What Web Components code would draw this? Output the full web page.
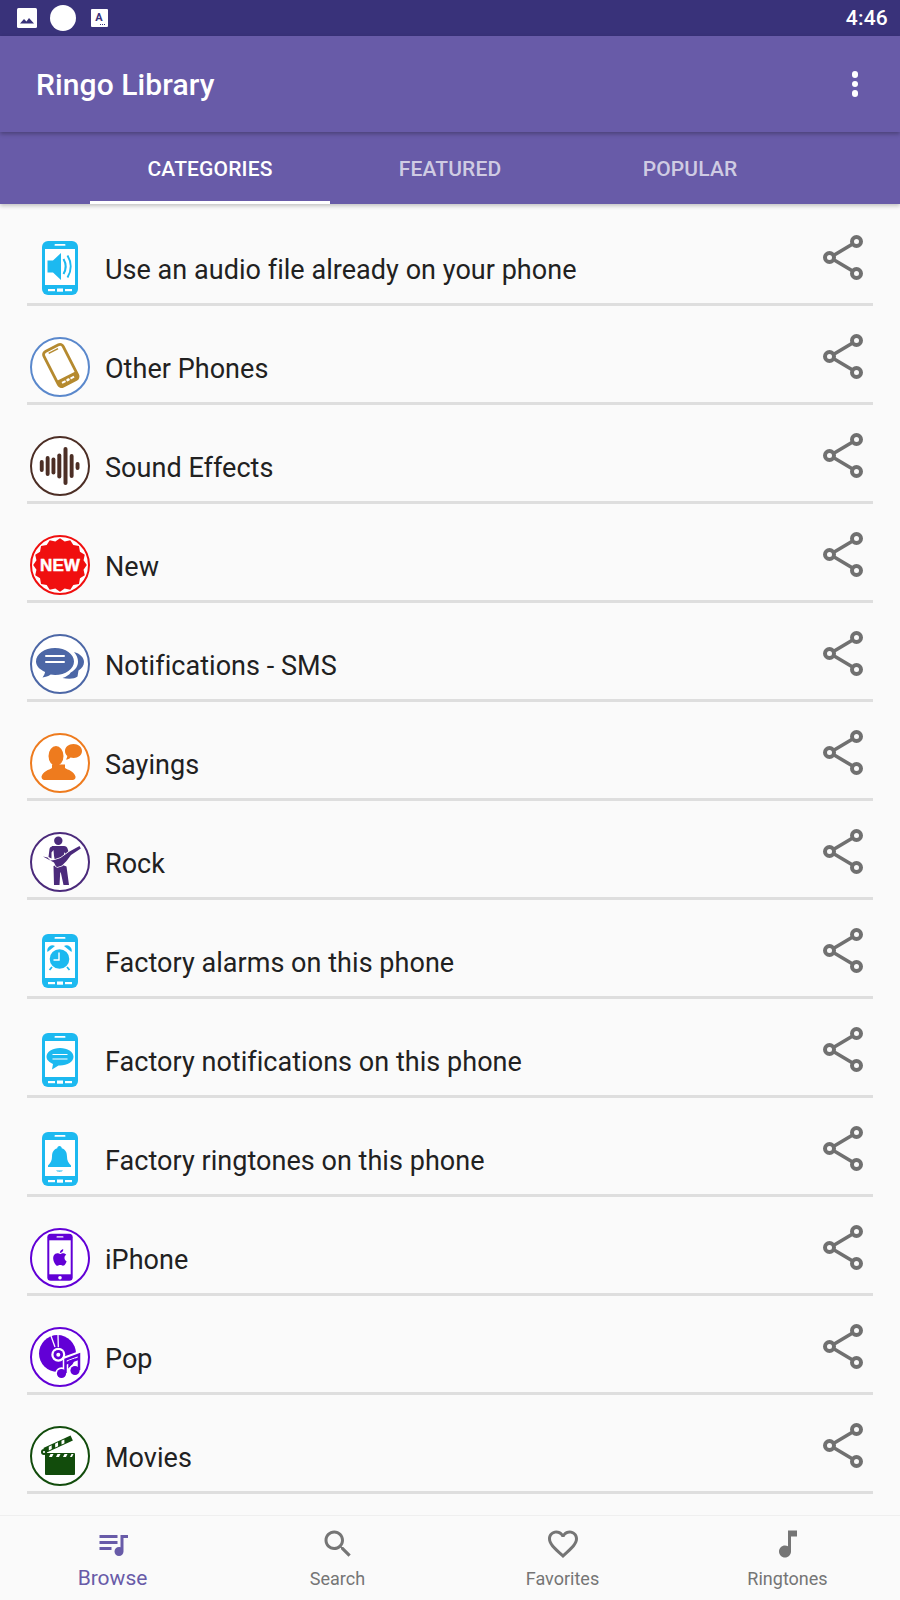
<!DOCTYPE html>
<html lang="en">
<head>
<meta charset="utf-8">
<title>Ringo Library</title>
<style>
    html, body { margin: 0; padding: 0; background: #fafafa; }
    body { font-family: Roboto, "Liberation Sans", sans-serif; }
</style>
</head>
<body>
<ringo-app>
    <status-bar slot="top"></status-bar>
    <app-bar slot="top">Ringo Library</app-bar>
    <tab-strip slot="top">
        <tab-item active>CATEGORIES</tab-item>
        <tab-item>FEATURED</tab-item>
        <tab-item>POPULAR</tab-item>
    </tab-strip>

    <category-row icon="audio">Use an audio file already on your phone</category-row>
    <category-row icon="phones">Other Phones</category-row>
    <category-row icon="sound">Sound Effects</category-row>
    <category-row icon="new">New</category-row>
    <category-row icon="sms">Notifications - SMS</category-row>
    <category-row icon="sayings">Sayings</category-row>
    <category-row icon="rock">Rock</category-row>
    <category-row icon="alarm">Factory alarms on this phone</category-row>
    <category-row icon="message">Factory notifications on this phone</category-row>
    <category-row icon="bell">Factory ringtones on this phone</category-row>
    <category-row icon="iphone">iPhone</category-row>
    <category-row icon="pop">Pop</category-row>
    <category-row icon="movies">Movies</category-row>

    <nav-bar slot="bottom">
        <nav-item icon="browse" active>Browse</nav-item>
        <nav-item icon="search">Search</nav-item>
        <nav-item icon="heart">Favorites</nav-item>
        <nav-item icon="note">Ringtones</nav-item>
    </nav-bar>
</ringo-app>

<script>
const BLUE = '#1cb9f0';
const VIOLET = '#6200d6';
const RED = '#f00f0f';

// body and bottom keys shared by all the blue phone icons
function phone(inner) {
    return `<svg class="tall" width="36" height="54" viewBox="0 0 36 54">
        <rect width="36" height="54" rx="6" fill="${BLUE}"/>
        <rect x="3" y="8" width="30" height="36" fill="#fff"/>
        <rect x="12.5" y="3" width="11" height="1.8" rx=".9" fill="#fff"/>
        <rect x="6" y="48" width="7" height="2.2" fill="#fff"/>
        <rect x="15" y="47.5" width="6" height="3.2" fill="#fff"/>
        <rect x="23" y="48" width="7" height="2.2" fill="#fff"/>
        ${inner}
    </svg>`;
}

function circled(color, inner) {
    return `<svg width="60" height="60" viewBox="0 0 60 60">
        <circle cx="30" cy="30" r="29" fill="#fff" stroke="${color}" stroke-width="2"/>
        ${inner}
    </svg>`;
}

// scalloped edge of the NEW badge
function badgeEdge() {
    const pts = [];
    for (let i = 0; i < 32; i++) {
        const r = i % 2 ? 24 : 26.8;
        const a = Math.PI * i / 16;
        pts.push((30 + r * Math.sin(a)).toFixed(2) + ',' + (30 - r * Math.cos(a)).toFixed(2));
    }
    return pts.join(' ');
}

const CATEGORY_ICONS = {
    audio: phone(`<path d="M5.5 19.5h5.500l8-7.500v27l-8-7.500H5.500z" fill="${BLUE}"/>
        <path d="M21.500 18c2.800 4.800 2.800 10.200 0 15M25.500 14.500c4.200 6.800 4.200 15.200 0 22" fill="none" stroke="${BLUE}" stroke-width="2"/>`),
    alarm: phone(`<path d="M5.500 18a5.200 5.200 0 0 1 7.500-6zM29.500 18a5.200 5.200 0 0 0-7.500-6z" fill="${BLUE}"/>
        <path d="M10 33l-2.500 3M25 33l2.500 3" stroke="${BLUE}" stroke-width="1.800"/>
        <circle cx="17.500" cy="25" r="9.800" fill="${BLUE}"/>
        <path d="M17 18.500v7.500h-5.500" fill="none" stroke="#fff" stroke-width="1.400"/>`),
    message: phone(`<path d="M18 15c7.500 0 13.500 3.800 13.500 8.800s-6 8.700-13.500 8.700c-.6 0-1 0-1.500-.1L10 36.500l1-5.600C7.200 29.400 4.500 26.800 4.500 23.800 4.500 18.800 10.500 15 18 15z" fill="${BLUE}"/>
        <path d="M10.500 21.500h15M10.500 26h15" stroke="#fff" stroke-width="1.200"/>`),
    bell: phone(`<path d="M17.500 14c1.400 0 2.200 1 2.200 2.200 4 1.200 5.300 4.500 5.300 8.300 0 4 1.300 6.500 4 9v1.500H6v-1.500c2.700-2.500 4-5 4-9 0-3.800 1.300-7.100 5.300-8.300 0-1.200.8-2.200 2.200-2.200z" fill="${BLUE}"/>
        <path d="M14 38.500c1.500 1.600 5.500 1.600 7 0z" fill="${BLUE}"/>`),
    phones: circled('#5a88cc', `<g transform="rotate(-27 30.800 28.500)">
        <rect x="20" y="9" width="21.600" height="39" rx="3.500" fill="#fff" stroke="#b58a2f" stroke-width="2.800"/>
        <path d="M20 40.500h21.600v4a3.500 3.500 0 0 1-3.500 3.500H23.500a3.500 3.500 0 0 1-3.500-3.500z" fill="#b58a2f"/>
        <rect x="25.500" y="11.500" width="10.500" height="1.500" fill="#b58a2f"/>
        <rect x="24" y="43.500" width="4" height="2" fill="#fff"/><rect x="29" y="43.300" width="3.500" height="2.500" rx="1" fill="#fff"/><rect x="33.500" y="43.500" width="4" height="2" fill="#fff"/>
    </g>`),
    sound: circled('#4c2e25', `<g fill="#4c2e25">
        <rect x="9.800" y="24" width="3.900" height="12" rx="1.900"/>
        <rect x="15.700" y="20" width="3.900" height="20" rx="1.900"/>
        <rect x="21.500" y="21.500" width="3.900" height="17" rx="1.900"/>
        <rect x="27.300" y="17.500" width="4" height="25" rx="2"/>
        <rect x="33.500" y="11" width="4" height="38" rx="2"/>
        <rect x="39.700" y="18" width="3.900" height="24" rx="1.900"/>
        <rect x="45.600" y="26" width="3.900" height="8" rx="1.900"/>
    </g>`),
    new: `<svg width="60" height="60" viewBox="0 0 60 60">
        <circle cx="30" cy="30" r="29" fill="#fff" stroke="${RED}" stroke-width="2"/>
        <polygon points="${badgeEdge()}" fill="${RED}"/>
        <text x="30" y="36" text-anchor="middle" font-family="'Liberation Sans',sans-serif" font-weight="700" font-size="17" fill="#fff" stroke="#fff" stroke-width=".5">NEW</text>
    </svg>`,
    sms: circled('#4c67a6', `<path d="M44 18c6 1.500 10 5.500 10 10 0 3.500-2 6.500-5.500 8.500l-1 6c-3 2.500-9 2.600-15 1.500 4-1.300 6.800-3.200 8.200-5.500 5-2.500 7.300-6.500 7.300-11 0-3.400-1.500-6.700-4-9.500z" fill="#4c67a6"/>
        <path d="M25 14c10.500 0 19 6 19 13.500S35.500 41 25 41c-1.500 0-3-.1-4.300-.4-2.500 1.700-5.200 2.600-8.200 2.800 1.400-1.800 2.300-3.800 2.600-5.500C9.500 35.500 6 31.800 6 27.500 6 20 14.500 14 25 14z" fill="#4c67a6" stroke="#fff" stroke-width="1.500" paint-order="stroke"/>
        <path d="M16 22h18M16 28h18" stroke="#fff" stroke-width="2" stroke-linecap="round"/>`),
    sayings: circled('#ee7b1e', `<g fill="#ee7b1e">
        <ellipse cx="26" cy="23" rx="7.500" ry="10"/>
        <path d="M22 31.500v3.500c-3 2-9 3-10.500 8.500 0 2 1 3.500 3 3.500h28c2 0 3.300-1.500 3-3.500-1.500-5.500-7.500-6.500-10.500-8.500v-3.500z"/>
        <path d="M43.500 11c5 0 8.500 3.200 8.500 7s-3.500 7-8.500 7c-1 0-2-.1-3-.4-1.200 1.400-2.800 2-4.500 2 .8-1 1.200-2.200 1.300-3.500-1.500-1.200-2.300-3.300-2.300-5.100 0-3.800 3.500-7 8.500-7z"/>
    </g>`),
    rock: circled('#4b2a7b', `<g fill="#4b2a7b">
        <circle cx="28.300" cy="8.800" r="4.200"/>
        <path d="M22 14h12c2 0 3 1 3.500 2.500L39 21l-3.500 1.500-1.500-2.500v6l-9 3-1-5-.5-6-2 2.500v6l-3-1.500 1-8c.3-1.600 1.200-2.500 2.500-2.500z"/>
        <path d="M23.500 34l6.500-2 6.500 2.500L39 53h-5.500l-2.700-12.500h-.6L29.500 53h-5.500z"/>
        <path d="M13 24.500l4.500 1 3 3 4-.5 6-2 9-6.500 10-5.500 1.300 2.400-9.800 6.600-4.500 6-4.500 4.500-4.500 1.500-1.500-.5-2-4z" stroke="#fff" stroke-width="1.500" paint-order="stroke"/>
    </g>`),
    iphone: circled(VIOLET, `<rect x="17.300" y="5.700" width="25.400" height="47" rx="3.500" fill="${VIOLET}"/>
        <rect x="19.300" y="12.300" width="21.400" height="34" fill="#fff"/>
        <rect x="26.500" y="8.300" width="7" height="1.200" rx=".6" fill="#fff"/>
        <circle cx="30" cy="49.700" r="1.800" fill="#fff"/>
        <path transform="translate(20 19.500) scale(.83)" fill="${VIOLET}" d="M18.710 19.500c-.83 1.240-1.710 2.450-3.050 2.470-1.340.03-1.770-.79-3.290-.79-1.530 0-2 .77-3.270.82-1.310.05-2.300-1.320-3.140-2.530C4.250 17 2.940 12.450 4.700 9.390c.87-1.520 2.430-2.480 4.120-2.510 1.280-.02 2.500.87 3.290.87.78 0 2.260-1.070 3.810-.91.65.03 2.470.26 3.640 1.980-.09.06-2.170 1.280-2.150 3.810.03 3.020 2.650 4.030 2.680 4.040-.03.07-.42 1.440-1.380 2.830M13 3.500c.73-.83 1.940-1.460 2.940-1.500.13 1.170-.34 2.350-1.040 3.190-.69.85-1.830 1.510-2.950 1.420-.15-1.150.41-2.350 1.050-3.110z"/>`),
    pop: circled(VIOLET, `<circle cx="27.500" cy="26.500" r="18.500" fill="${VIOLET}"/>
        <path d="M21 9l4 11M28 8l.3 12" stroke="#fff" stroke-width="1.300"/>
        <circle cx="28.300" cy="27.700" r="7" fill="#fff"/>
        <circle cx="28.300" cy="27.700" r="4.800" fill="${VIOLET}"/>
        <circle cx="28.300" cy="27.700" r="2" fill="#fff"/>
        <path d="M35.500 46V32l14-5v16" fill="none" stroke="#fff" stroke-width="5.500"/>
        <circle cx="31.500" cy="46.500" r="6.200" fill="#fff"/><circle cx="45" cy="43.500" r="6.200" fill="#fff"/>
        <path d="M35.500 46V32.500l13.500-5V43" fill="none" stroke="${VIOLET}" stroke-width="2.500"/>
        <path d="M35.500 36.500L49 31.500" stroke="${VIOLET}" stroke-width="2.500"/>
        <circle cx="31.500" cy="46.500" r="4.600" fill="${VIOLET}"/><circle cx="45" cy="43.500" r="4.600" fill="${VIOLET}"/>`),
    movies: circled('#124c0c', `<rect x="15" y="27" width="30" height="22" rx="1" fill="#124c0c"/>
        <path d="M19 31l1.500-3h3l-1.500 3zM26 31l1.500-3h3l-1.500 3zM33 31l1.500-3h3l-1.500 3zM40 31l1.500-3h2l-1.500 3z" fill="#fff"/>
        <g transform="rotate(-25 28 18)">
            <rect x="13" y="15.500" width="30" height="5.500" fill="#124c0c"/>
            <path d="M17 20l1.500-3.500h3.200L20.200 20zM24 20l1.500-3.500h3.200L27.200 20zM31 20l1.500-3.500h3.200L34.200 20z" fill="#fff"/>
        </g>
        <circle cx="14" cy="26" r="3" fill="#124c0c"/><circle cx="14" cy="26" r="1.100" fill="#fff"/>`)
};

const NAV_ICONS = {
    browse: 'M15 6H3v2h12V6zm0 4H3v2h12v-2zM3 16h8v-2H3v2zM17 6v8.180c-.31-.11-.65-.18-1-.18-1.660 0-3 1.340-3 3s1.340 3 3 3 3-1.340 3-3V8h3V6h-5z',
    search: 'M15.500 14h-.79l-.28-.27C15.410 12.590 16 11.110 16 9.500 16 5.910 13.090 3 9.500 3S3 5.910 3 9.500 5.910 16 9.500 16c1.610 0 3.090-.59 4.230-1.570l.27.28v.79l5 4.990L20.490 19l-4.990-5zm-6 0C7.010 14 5 11.990 5 9.500S7.010 5 9.500 5 14 7.010 14 9.500 11.990 14 9.500 14z',
    heart: 'M16.500 3c-1.740 0-3.410.81-4.500 2.090C10.910 3.810 9.240 3 7.500 3 4.420 3 2 5.420 2 8.500c0 3.780 3.400 6.860 8.550 11.540L12 21.350l1.450-1.320C18.600 15.360 22 12.280 22 8.500 22 5.420 19.580 3 16.500 3zm-4.400 15.550l-.1.1-.1-.1C7.140 14.240 4 11.390 4 8.500 4 6.500 5.500 5 7.500 5c1.540 0 3.040.99 3.570 2.360h1.870C13.460 5.990 14.960 5 16.500 5c2 0 3.500 1.500 3.500 3.500 0 2.890-3.140 5.740-7.900 10.050z',
    note: 'M12 3v10.550c-.59-.34-1.270-.55-2-.55-2.210 0-4 1.790-4 4s1.790 4 4 4 4-1.790 4-4V7h4V3h-6z'
};

class RingoApp extends HTMLElement {
    connectedCallback() {
        this.attachShadow({ mode: 'open' });
        this.shadowRoot.innerHTML = `
            <style>
                :host {
                    display: flex;
                    flex-direction: column;
                    width: 900px;
                    height: 1600px;
                    overflow: hidden;
                    background: #fafafa;
                }
                .top { position: relative; z-index: 2; flex: none; }
                .list {
                    flex: 1;
                    padding-top: 3px;
                    overflow: hidden;
                }
            </style>
            <div class="top"><slot name="top"></slot></div>
            <div class="list"><slot></slot></div>
            <slot name="bottom"></slot>
        `;
    }
}

class StatusBar extends HTMLElement {
    connectedCallback() {
        this.attachShadow({ mode: 'open' });
        this.shadowRoot.innerHTML = `
            <style>
                :host {
                    display: flex;
                    align-items: center;
                    height: 36px;
                    padding: 0 12px 0 17px;
                    background: #39327a;
                    color: #fff;
                }
                .icons { display: flex; align-items: center; flex: 1; }
                svg { display: block; }
                .dot { margin-left: 13px; width: 26px; height: 26px; border-radius: 50%; background: #fff; }
                .a { margin-left: 15px; }
                .time { font: 500 21px Roboto, sans-serif; letter-spacing: 0.2px; }
            </style>
            <div class="icons">
                <svg width="20" height="20" viewBox="0 0 20 20">
                    <rect width="20" height="20" rx="1.500" fill="#fff"/>
                    <path d="M3 15.500l4-4.500 2.500 2.500 2.500-3.500 5 5.500z" fill="#39327a"/>
                </svg>
                <div class="dot"></div>
                <svg class="a" width="17" height="18" viewBox="0 0 17 18">
                    <rect width="17" height="18" rx="1" fill="#fff"/>
                    <text x="8" y="11.500" text-anchor="middle" font-family="Roboto, sans-serif" font-weight="700" font-size="11" fill="#39327a">A</text>
                    <path d="M9 15.500h6" stroke="#39327a" stroke-width="1" stroke-dasharray="1 1"/>
                </svg>
            </div>
            <span class="time">4:46</span>
        `;
    }
}

class AppBar extends HTMLElement {
    connectedCallback() {
        this.attachShadow({ mode: 'open' });
        this.shadowRoot.innerHTML = `
            <style>
                :host {
                    display: flex;
                    align-items: center;
                    position: relative;
                    z-index: 1;
                    height: 96px;
                    padding: 0 36px;
                    background: #685ba8;
                    color: #fff;
                    box-shadow: 0 2px 4px rgba(0, 0, 0, 0.28);
                }
                .title { flex: 1; font: 500 30px Roboto, sans-serif; letter-spacing: 0.1px; }
                .more { display: flex; flex-direction: column; gap: 3px; margin-right: 6px; }
                .more i { width: 6.5px; height: 6.500px; border-radius: 50%; background: #fff; }
            </style>
            <span class="title"><slot></slot></span>
            <div class="more"><i></i><i></i><i></i></div>
        `;
    }
}

class TabStrip extends HTMLElement {
    connectedCallback() {
        this.attachShadow({ mode: 'open' });
        this.shadowRoot.innerHTML = `
            <style>
                :host {
                    display: flex;
                    justify-content: center;
                    height: 72px;
                    background: #685ba8;
                    box-shadow: 0 2px 4px rgba(0, 0, 0, 0.22);
                }
            </style>
            <slot></slot>
        `;
    }
}

class TabItem extends HTMLElement {
    connectedCallback() {
        this.attachShadow({ mode: 'open' });
        this.shadowRoot.innerHTML = `
            <style>
                :host {
                    display: flex;
                    align-items: center;
                    justify-content: center;
                    box-sizing: border-box;
                    width: 240px;
                    height: 72px;
                    padding-top: 4px;
                    border-bottom: 3px solid transparent;
                    font: 500 21px Roboto, sans-serif;
                    letter-spacing: 0.15px;
                    color: rgba(255, 255, 255, 0.7);
                }
                :host([active]) { color: #fff; border-bottom-color: #fff; }
            </style>
            <slot></slot>
        `;
    }
}

class CategoryRow extends HTMLElement {
    connectedCallback() {
        this.attachShadow({ mode: 'open' });
        this.shadowRoot.innerHTML = `
            <style>
                :host {
                    display: flex;
                    box-sizing: border-box;
                    height: 99px;
                    margin: 0 27px;
                    border-bottom: 3px solid #dedede;
                    color: #212121;
                    font: 400 27px Roboto, sans-serif;
                    letter-spacing: 0.04px;
                }
                .icon {
                    flex: none;
                    display: flex;
                    justify-content: center;
                    width: 60px;
                    height: 60px;
                    margin: 31px 15px 0 3px;
                }
                .icon svg { display: block; }
                .icon svg.tall { margin-top: 3px; }
                .label { flex: 1; padding-top: 47px; line-height: 32px; white-space: nowrap; }
                .share { flex: none; margin: 28px 10px 0 0; }
                .share svg { display: block; }
            </style>
            <div class="icon">${CATEGORY_ICONS[this.getAttribute('icon')]}</div>
            <span class="label"><slot></slot></span>
            <div class="share">
                <svg width="40" height="45" viewBox="0 0 40 45" fill="none" stroke="#707070">
                    <path d="M7 22.500L33 7M7 22.500L33 38" stroke-width="3.600"/>
                    <circle cx="33.500" cy="6.500" r="4.500" fill="#fafafa" stroke-width="4"/>
                    <circle cx="6.500" cy="22.500" r="4.500" fill="#fafafa" stroke-width="4"/>
                    <circle cx="33.500" cy="38.500" r="4.500" fill="#fafafa" stroke-width="4"/>
                </svg>
            </div>
        `;
    }
}

class NavBar extends HTMLElement {
    connectedCallback() {
        this.attachShadow({ mode: 'open' });
        this.shadowRoot.innerHTML = `
            <style>
                :host {
                    display: grid;
                    grid-template-columns: repeat(4, 1fr);
                    flex: none;
                    height: 84px;
                    background: #fafafa;
                    border-top: 1px solid #efefef;
                }
            </style>
            <slot></slot>
        `;
    }
}

class NavItem extends HTMLElement {
    connectedCallback() {
        this.attachShadow({ mode: 'open' });
        this.shadowRoot.innerHTML = `
            <style>
                :host {
                    display: flex;
                    flex-direction: column;
                    align-items: center;
                    color: #757575;
                    font: 400 18px Roboto, sans-serif;
                }
                :host([active]) { color: #685ba8; font-size: 21px; }
                svg { display: block; margin-top: 10px; fill: currentColor; }
                span { line-height: 24px; margin-top: 5px; }
                :host([active]) span { margin-top: 4px; }
            </style>
            <svg width="36" height="36" viewBox="0 0 24 24"><path d="${NAV_ICONS[this.getAttribute('icon')]}"/></svg>
            <span><slot></slot></span>
        `;
    }
}

customElements.define('ringo-app', RingoApp);
customElements.define('status-bar', StatusBar);
customElements.define('app-bar', AppBar);
customElements.define('tab-strip', TabStrip);
customElements.define('tab-item', TabItem);
customElements.define('category-row', CategoryRow);
customElements.define('nav-bar', NavBar);
customElements.define('nav-item', NavItem);
</script>
</body>
</html>
